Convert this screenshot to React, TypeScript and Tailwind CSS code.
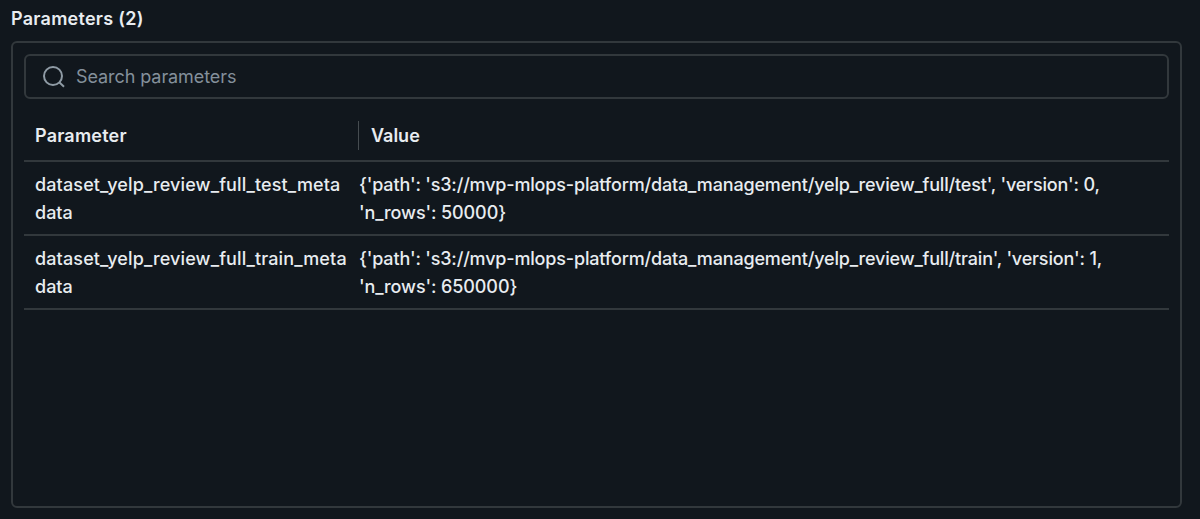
import React from "react";

type Parameter = { name: string[]; value: string[] };

const parameters: Parameter[] = [
  {
    name: ["dataset_yelp_review_full_test_meta", "data"],
    value: ["{'path': 's3://mvp-mlops-platform/data_management/yelp_review_full/test', 'version': 0,", "'n_rows': 50000}"],
  },
  {
    name: ["dataset_yelp_review_full_train_meta", "data"],
    value: ["{'path': 's3://mvp-mlops-platform/data_management/yelp_review_full/train', 'version': 1,", "'n_rows': 650000}"],
  },
];

export default function App() {
  return (
    <main className="flex h-[519px] w-[1200px] flex-col bg-[#11171d] pl-[11px] pr-[18px] pt-[7px] pb-[11px] font-['Inter',sans-serif] text-[18px] text-[#e8ecf0]">
      <h1 className="h-[34px] text-[18px] font-semibold leading-6 tracking-[0.26px]">Parameters (2)</h1>
      <section className="flex min-h-0 flex-1 flex-col rounded-[6px] border-2 border-[#32383c] px-[11px] pt-[11px]">
        <label className="flex h-[45px] shrink-0 items-center gap-[10px] rounded-[6px] border-2 border-[#32383c] pl-[17px]">
          <svg className="size-[23px] text-[#8f9ba5]" viewBox="0 0 23 23" fill="none" stroke="currentColor" strokeWidth="2">
            <circle cx="10" cy="11" r="9" />
            <path d="m16.5 17.5 4.5 4.2" />
          </svg>
          <span className="tracking-[-0.08px] text-[#84909b]">Search parameters</span>
        </label>
        <div className="flex h-[63px] shrink-0 items-center border-b-2 border-[#32383c] pt-[11px] font-semibold">
          <div className="w-[334px] pl-[11px] tracking-[0.2px]">Parameter</div>
          <div className="flex h-[29px] items-center border-l border-[#464c50] pl-[12px]">Value</div>
        </div>
        {parameters.map((p) => (
          <div key={p.name[0]} className="flex h-[74px] shrink-0 border-b-2 border-[#32383c] pt-[9px] leading-7 font-[450] whitespace-nowrap">
            <div className="w-[335px] pl-[11px]">
              <div className="tracking-[0.13px]">{p.name[0]}</div>
              <div>{p.name[1]}</div>
            </div>
            <div>
              <div className="tracking-[-0.17px]">{p.value[0]}</div>
              <div className="tracking-[-0.1px]">{p.value[1]}</div>
            </div>
          </div>
        ))}
      </section>
    </main>
  );
}
